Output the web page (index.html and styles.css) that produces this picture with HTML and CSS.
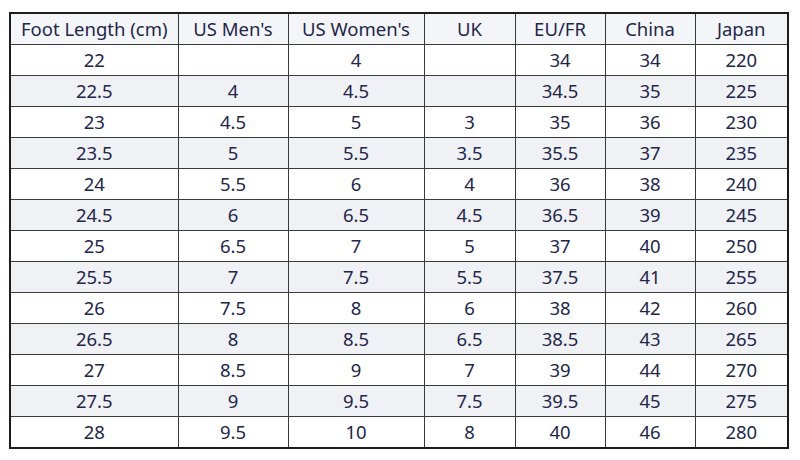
FILE: index.html
```html
<!DOCTYPE html>
<html>
<head>
<meta charset="utf-8">
<link rel="stylesheet" href="styles.css">
</head>
<body>
<div class="page">
<table class="sizes">
<colgroup>
<col class="c1"><col class="c2"><col class="c3"><col class="c4"><col class="c5"><col class="c6"><col class="c7">
</colgroup>
<thead>
<tr><th>Foot Length (cm)</th><th>US Men's</th><th>US Women's</th><th>UK</th><th>EU/FR</th><th>China</th><th>Japan</th></tr>
</thead>
<tbody>
<tr><td>22</td><td></td><td>4</td><td></td><td>34</td><td>34</td><td>220</td></tr>
<tr><td>22.5</td><td>4</td><td>4.5</td><td></td><td>34.5</td><td>35</td><td>225</td></tr>
<tr><td>23</td><td>4.5</td><td>5</td><td>3</td><td>35</td><td>36</td><td>230</td></tr>
<tr><td>23.5</td><td>5</td><td>5.5</td><td>3.5</td><td>35.5</td><td>37</td><td>235</td></tr>
<tr><td>24</td><td>5.5</td><td>6</td><td>4</td><td>36</td><td>38</td><td>240</td></tr>
<tr><td>24.5</td><td>6</td><td>6.5</td><td>4.5</td><td>36.5</td><td>39</td><td>245</td></tr>
<tr><td>25</td><td>6.5</td><td>7</td><td>5</td><td>37</td><td>40</td><td>250</td></tr>
<tr><td>25.5</td><td>7</td><td>7.5</td><td>5.5</td><td>37.5</td><td>41</td><td>255</td></tr>
<tr><td>26</td><td>7.5</td><td>8</td><td>6</td><td>38</td><td>42</td><td>260</td></tr>
<tr><td>26.5</td><td>8</td><td>8.5</td><td>6.5</td><td>38.5</td><td>43</td><td>265</td></tr>
<tr><td>27</td><td>8.5</td><td>9</td><td>7</td><td>39</td><td>44</td><td>270</td></tr>
<tr><td>27.5</td><td>9</td><td>9.5</td><td>7.5</td><td>39.5</td><td>45</td><td>275</td></tr>
<tr><td>28</td><td>9.5</td><td>10</td><td>8</td><td>40</td><td>46</td><td>280</td></tr>
</tbody>
</table>
</div>
</body>
</html>
```
FILE: styles.css
```css
html, body {
  margin: 0;
  padding: 0;
  background: #ffffff;
}
.page {
  padding: 12px 0 0 9px;
}
.sizes {
  border-collapse: collapse;
  table-layout: fixed;
  width: 780px;
  border: 2px solid #1c1c1c;
  font-family: "Noto Sans", "Open Sans", sans-serif;
  font-size: 18.5px;
  color: #23264a;
}
.c1 { width: 168px; }
.c2 { width: 110px; }
.c3 { width: 136px; }
.c4 { width: 91px; }
.c5 { width: 90px; }
.c6 { width: 90px; }
.c7 { width: 93px; }
.sizes th, .sizes td {
  height: 30px;
  padding: 0;
  border: 1px solid #3a3a3a;
  text-align: center;
  vertical-align: middle;
  font-weight: normal;
  line-height: 20px;
}
.sizes thead th {
  background: #f4f5f9;
}
.sizes tbody tr:nth-child(even) td {
  background: #f0f1f5;
}
.sizes tbody tr:nth-child(odd) td {
  background: #ffffff;
}
```
